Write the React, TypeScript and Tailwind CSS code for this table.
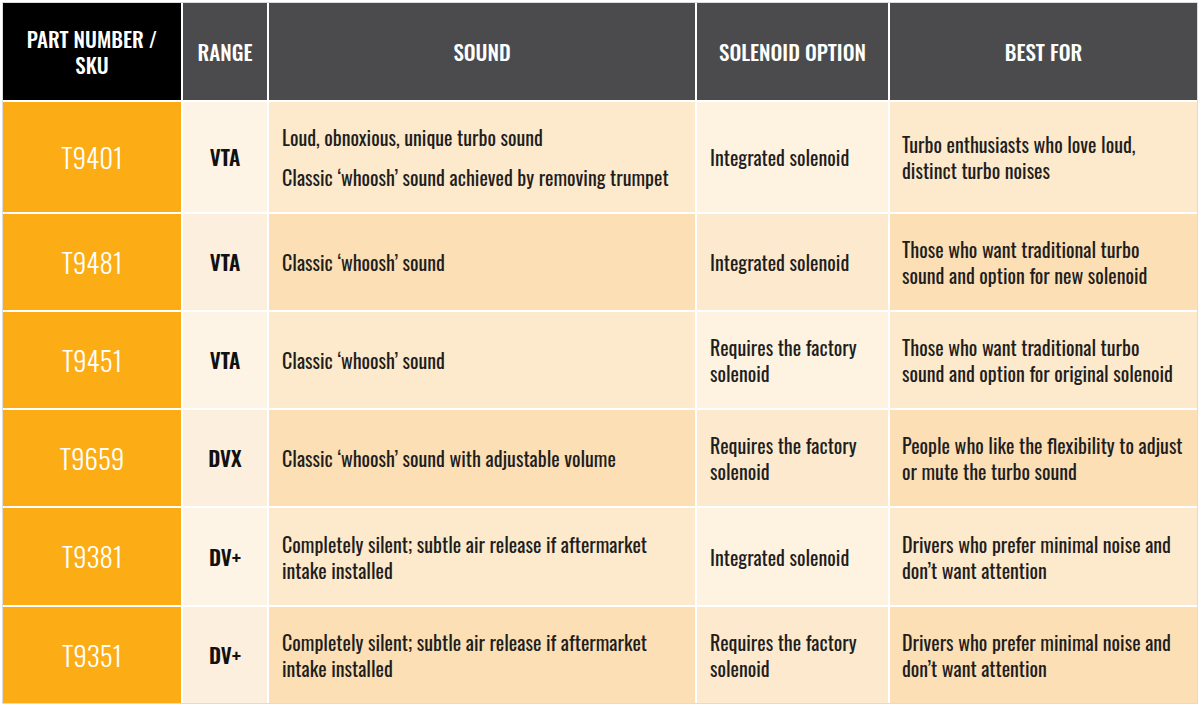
import React from 'react';

type Row = {
  sku: string;
  range: string;
  sound: string[][];
  solenoid: string[];
  bestFor: string[];
};

const ROWS: Row[] = [
  {
    sku: 'T9401',
    range: 'VTA',
    sound: [['Loud, obnoxious, unique turbo sound'], ['Classic ‘whoosh’ sound achieved by removing trumpet']],
    solenoid: ['Integrated solenoid'],
    bestFor: ['Turbo enthusiasts who love loud,', 'distinct turbo noises'],
  },
  {
    sku: 'T9481',
    range: 'VTA',
    sound: [['Classic ‘whoosh’ sound']],
    solenoid: ['Integrated solenoid'],
    bestFor: ['Those who want traditional turbo', 'sound and option for new solenoid'],
  },
  {
    sku: 'T9451',
    range: 'VTA',
    sound: [['Classic ‘whoosh’ sound']],
    solenoid: ['Requires the factory', 'solenoid'],
    bestFor: ['Those who want traditional turbo', 'sound and option for original solenoid'],
  },
  {
    sku: 'T9659',
    range: 'DVX',
    sound: [['Classic ‘whoosh’ sound with adjustable volume']],
    solenoid: ['Requires the factory', 'solenoid'],
    bestFor: ['People who like the flexibility to adjust', 'or mute the turbo sound'],
  },
  {
    sku: 'T9381',
    range: 'DV+',
    sound: [['Completely silent; subtle air release if aftermarket', 'intake installed']],
    solenoid: ['Integrated solenoid'],
    bestFor: ['Drivers who prefer minimal noise and', 'don’t want attention'],
  },
  {
    sku: 'T9351',
    range: 'DV+',
    sound: [['Completely silent; subtle air release if aftermarket', 'intake installed']],
    solenoid: ['Requires the factory', 'solenoid'],
    bestFor: ['Drivers who prefer minimal noise and', 'don’t want attention'],
  },
];

const HEADERS = ['RANGE', 'SOUND', 'SOLENOID OPTION', 'BEST FOR'];

const Lines: React.FC<{ lines: string[] }> = ({ lines }) => (
  <p>
    {lines.map((l, i) => (
      <span key={i} className="block whitespace-nowrap">
        {l}
      </span>
    ))}
  </p>
);

const App: React.FC = () => {
  return (
    <div className="bg-white w-[1200px] h-[707px] p-[2px] font-['Oswald','Roboto_Condensed',sans-serif]">
      <div className="border border-[#dcdcdc] w-[1196px]">
        <div className="grid grid-cols-[178px_84px_426px_191px_307px] grid-rows-[97px_110px_96px_96px_96px_97px_96px] gap-[2px] bg-white">
          <div className="bg-black text-white font-medium text-[21px] leading-[26px] flex flex-col items-center justify-center text-center">
            <span>PART NUMBER /</span>
            <span>SKU</span>
          </div>
          {HEADERS.map((h) => (
            <div
              key={h}
              className="bg-[#4b4b4d] text-white font-medium text-[21px] leading-[26px] flex items-center justify-center text-center"
            >
              {h}
            </div>
          ))}

          {ROWS.map((row, i) => {
            const even = i % 2 === 1;
            return (
              <React.Fragment key={row.sku}>
                <div className="bg-[#fcad16] text-white font-light text-[27px] flex items-center justify-center">
                  {row.sku}
                </div>
                <div
                  className={`${even ? 'bg-[#fdefdd]' : 'bg-[#fef4e6]'} text-[#111] font-semibold text-[21px] flex items-center justify-center`}
                >
                  {row.range}
                </div>
                <div
                  className={`${even ? 'bg-[#fcdfb5]' : 'bg-[#fde9cb]'} text-[#1e1e1e] font-normal text-[20px] leading-[26px] flex flex-col justify-center gap-[14px] pl-[13px]`}
                >
                  {row.sound.map((s, k) => (
                    <Lines key={k} lines={s} />
                  ))}
                </div>
                <div
                  className={`${even ? 'bg-[#fde9cd]' : 'bg-[#fef2e1]'} text-[#1e1e1e] font-normal text-[20px] leading-[26px] flex items-center pl-[13px]`}
                >
                  <Lines lines={row.solenoid} />
                </div>
                <div
                  className={`${even ? 'bg-[#fcdfb5]' : 'bg-[#fde9cb]'} text-[#1e1e1e] font-normal text-[20px] leading-[26px] flex items-center pl-[12px]`}
                >
                  <Lines lines={row.bestFor} />
                </div>
              </React.Fragment>
            );
          })}
        </div>
      </div>
    </div>
  );
};

export default App;
